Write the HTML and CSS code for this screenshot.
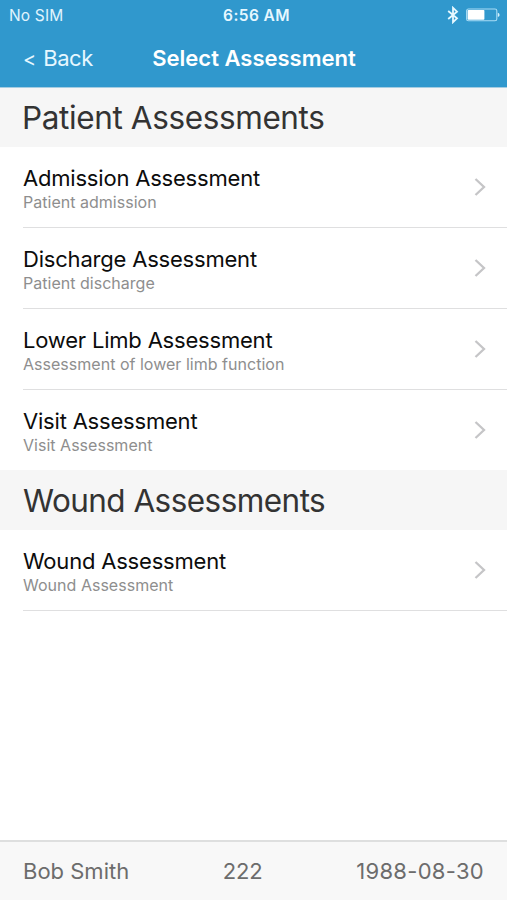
FILE: index.html
```
<!DOCTYPE html>
<html lang="en">
<head>
<meta charset="utf-8">
<title>Select Assessment</title>
<link rel="stylesheet" href="styles.css">
</head>
<body>
<svg class="defs" width="0" height="0" aria-hidden="true">
  <symbol id="chevron" viewBox="0 0 12 20"><path d="M1.5 2 L10 10 L1.5 18" fill="none" stroke="#c5c5c7" stroke-width="2.3"/></symbol>
</svg>
<div class="app">
  <header class="header">
    <div class="status">
      <span class="carrier">No SIM</span>
      <span class="clock">6:56 AM</span>
      <span class="indicators">
        <svg width="12" height="18" viewBox="0 0 12 18"><path d="M1.2 5 L10 12.4 L6 16.2 V1.8 L10 5.6 L1.2 13" fill="none" stroke="#e6f8ff" stroke-width="1.8"/></svg>
        <svg width="34" height="14" viewBox="0 0 34 14"><rect x=".6" y="1" width="30.2" height="11.8" rx="1.8" fill="none" stroke="#a9dcf5" stroke-width="1.1"/><rect x="1.6" y="2" width="16.8" height="9.8" rx=".8" fill="#fff"/><path d="M31.8 4.7 Q33.6 5.3 33.6 6.9 T31.8 9.1Z" fill="#d5f1fd"/></svg>
      </span>
    </div>
    <nav class="nav">
      <a class="back"><span class="lt">&lt;</span> Back</a>
      <h1 class="title">Select Assessment</h1>
    </nav>
  </header>
  <main class="content">
    <h2 class="section">Patient Assessments</h2>
    <ul class="list">
      <li class="row"><div class="text"><div class="name">Admission Assessment</div><div class="desc">Patient admission</div></div><svg class="chevron"><use href="#chevron"/></svg></li>
      <li class="row"><div class="text"><div class="name">Discharge Assessment</div><div class="desc">Patient discharge</div></div><svg class="chevron"><use href="#chevron"/></svg></li>
      <li class="row"><div class="text"><div class="name">Lower Limb Assessment</div><div class="desc">Assessment of lower limb function</div></div><svg class="chevron"><use href="#chevron"/></svg></li>
      <li class="row row-plain"><div class="text"><div class="name">Visit Assessment</div><div class="desc">Visit Assessment</div></div><svg class="chevron"><use href="#chevron"/></svg></li>
    </ul>
    <h2 class="section section-wound">Wound Assessments</h2>
    <ul class="list">
      <li class="row"><div class="text"><div class="name">Wound Assessment</div><div class="desc">Wound Assessment</div></div><svg class="chevron"><use href="#chevron"/></svg></li>
    </ul>
  </main>
  <footer class="footer">
    <span>Bob Smith</span>
    <span class="number">222</span>
    <span class="date">1988-08-30</span>
  </footer>
</div>
</body>
</html>
```
FILE: styles.css
```
* { box-sizing: border-box; }
body { margin: 0; background: #fff; color: #0c0c0c; font-family: Inter, "Liberation Sans", sans-serif; }
.defs { position: absolute; }
.app { display: flex; flex-direction: column; height: 900px; }
.header { height: 88px; background: #3098cd; border-bottom: 1px solid #a5cde2; color: #fff; }
.status { display: grid; grid-template-columns: 1fr auto 1fr; height: 30px; padding: 0 7px 0 9px; align-items: center; font-size: 15.5px; line-height: 28px; }
.carrier { padding-top: 2px; letter-spacing: .15px; color: #e0f4fd; }
.clock { padding: 2px 0 0 4px; font-weight: 600; letter-spacing: .4px; color: #e6f7ff; }
.indicators { display: flex; justify-content: flex-end; align-items: center; gap: 7px; }
.nav { display: grid; grid-template-columns: 1fr auto 1fr; height: 56px; padding: 0 22px 0 23px; align-items: center; font-size: 22px; line-height: 56px; }
.back { letter-spacing: -.45px; color: #e6f7ff; white-space: nowrap; }
.lt { display: inline-block; font-size: 20px; width: 14.5px; }
.title { margin: 0; font-size: 22px; font-weight: 600; line-height: 54px; padding-bottom: 2px; }
.content { flex: 1; }
.section { margin: 0; height: 59px; padding-left: 22px; background: #f6f6f6; color: #333; font-size: 31.5px; font-weight: 400; line-height: 60px; letter-spacing: -.38px; }
.section-wound { height: 60px; letter-spacing: -.55px; line-height: 61px; padding-left: 23px; }
.list { margin: 0; padding: 0 0 0 23px; list-style: none; }
.row { display: flex; justify-content: space-between; height: 81px; padding: 18px 21px 0 0; border-bottom: 1.5px solid #dfdfe0; }
.row-plain { height: 80px; border-bottom: 0; }
.name { font-size: 22px; line-height: 26px; letter-spacing: -.2px; }
.desc { margin-top: 1px; color: #8e8e8e; font-size: 16px; line-height: 20px; letter-spacing: .02px; }
.chevron { width: 12px; height: 20px; margin-top: 11.5px; }
.footer { display: flex; justify-content: space-between; height: 60px; padding: 0 23px; background: #f8f8f8; border-top: 2px solid #dedfdf; color: #6c6c6c; font-size: 22px; line-height: 59px; }
.number { letter-spacing: -.1px; }
.date { letter-spacing: .3px; }
```
